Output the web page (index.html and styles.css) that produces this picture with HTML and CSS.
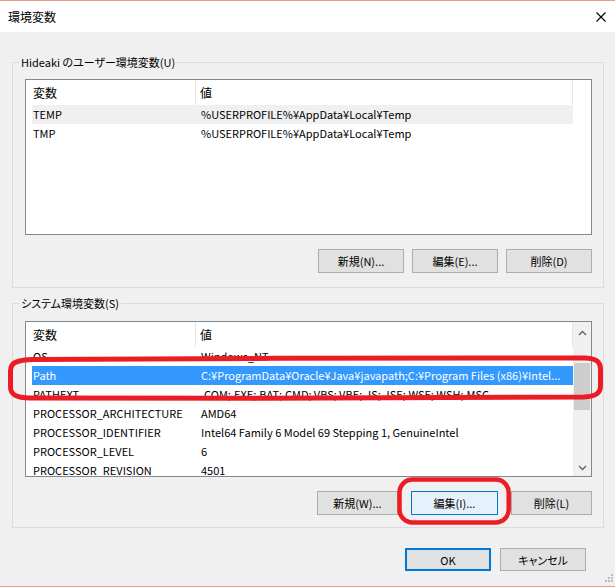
FILE: index.html
```html
<!DOCTYPE html>
<html lang="ja">
<head>
    <meta charset="UTF-8">
    <title>環境変数</title>
    <link rel="stylesheet" href="styles.css">
</head>
<body>
    <div class="window">
        <div class="titlebar">
            <span class="title">環境変数</span>
            <svg class="close-icon" width="10" height="10" viewBox="0 0 10 10">
                <path d="M0.5 0.5 L9.5 9.5 M9.5 0.5 L0.5 9.5" stroke="#000" stroke-width="1.1" fill="none"/>
            </svg>
        </div>

        <div class="content">
            <div class="group">
                <div class="group-label">Hideaki のユーザー環境変数(U)</div>
                <div class="listview">
                    <div class="list-main">
                        <div class="list-header">
                            <div class="col-head col-name">変数</div>
                            <div class="col-head col-value">値</div>
                        </div>
                        <div class="row row-inactive">
                            <span class="cell cell-name">TEMP</span>
                            <span class="cell cell-value">%USERPROFILE%¥AppData¥Local¥Temp</span>
                        </div>
                        <div class="row">
                            <span class="cell cell-name">TMP</span>
                            <span class="cell cell-value">%USERPROFILE%¥AppData¥Local¥Temp</span>
                        </div>
                    </div>
                </div>
                <div class="btn-row">
                    <button class="btn">新規(N)...</button>
                    <button class="btn">編集(E)...</button>
                    <button class="btn">削除(D)</button>
                </div>
            </div>

            <div class="group group-system">
                <div class="group-label">システム環境変数(S)</div>
                <div class="listview">
                    <div class="list-main">
                        <div class="list-header">
                            <div class="col-head col-name">変数</div>
                            <div class="col-head col-value">値</div>
                        </div>
                        <div class="row">
                            <span class="cell cell-name">OS</span>
                            <span class="cell cell-value">Windows_NT</span>
                        </div>
                        <div class="row row-selected">
                            <span class="cell cell-name">Path</span>
                            <span class="cell cell-value">C:¥ProgramData¥Oracle¥Java¥javapath;C:¥Program Files (x86)¥Intel...</span>
                        </div>
                        <div class="row">
                            <span class="cell cell-name">PATHEXT</span>
                            <span class="cell cell-value">.COM;.EXE;.BAT;.CMD;.VBS;.VBE;.JS;.JSE;.WSF;.WSH;.MSC</span>
                        </div>
                        <div class="row">
                            <span class="cell cell-name">PROCESSOR_ARCHITECTURE</span>
                            <span class="cell cell-value">AMD64</span>
                        </div>
                        <div class="row">
                            <span class="cell cell-name">PROCESSOR_IDENTIFIER</span>
                            <span class="cell cell-value">Intel64 Family 6 Model 69 Stepping 1, GenuineIntel</span>
                        </div>
                        <div class="row">
                            <span class="cell cell-name">PROCESSOR_LEVEL</span>
                            <span class="cell cell-value">6</span>
                        </div>
                        <div class="row">
                            <span class="cell cell-name">PROCESSOR_REVISION</span>
                            <span class="cell cell-value">4501</span>
                        </div>
                    </div>
                    <div class="scrollbar">
                        <div class="scroll-arrow scroll-up">
                            <svg width="9" height="6" viewBox="0 0 9 6"><path d="M1 5 L4.5 1.5 L8 5" stroke="#606060" stroke-width="1.3" fill="none"/></svg>
                        </div>
                        <div class="scroll-track">
                            <div class="scroll-thumb"></div>
                        </div>
                        <div class="scroll-arrow">
                            <svg width="9" height="6" viewBox="0 0 9 6"><path d="M1 1 L4.5 4.5 L8 1" stroke="#606060" stroke-width="1.3" fill="none"/></svg>
                        </div>
                    </div>
                </div>
                <div class="btn-row btn-row-system">
                    <button class="btn btn-narrow">新規(W)...</button>
                    <button class="btn btn-hover">編集(I)...</button>
                    <button class="btn btn-narrow">削除(L)</button>
                </div>
            </div>

            <div class="dialog-buttons">
                <button class="btn btn-dialog btn-default">OK</button>
                <button class="btn btn-dialog">キャンセル</button>
            </div>
        </div>

        <svg class="grip" width="12" height="12" viewBox="0 0 12 12">
            <rect x="9" y="1" width="2" height="2" fill="#bcbcbc"/>
            <rect x="6" y="4" width="2" height="2" fill="#bcbcbc"/>
            <rect x="9" y="4" width="2" height="2" fill="#bcbcbc"/>
            <rect x="3" y="7" width="2" height="2" fill="#bcbcbc"/>
            <rect x="6" y="7" width="2" height="2" fill="#bcbcbc"/>
            <rect x="9" y="7" width="2" height="2" fill="#bcbcbc"/>
        </svg>

        <!-- red hand-drawn marks over the screenshot -->
        <svg class="marks" width="615" height="587" viewBox="0 0 615 587">
            <path d="M34 359.5 C200 358.5 450 357.5 585 358 C597 358.5 600.5 362 600.5 370 L600.5 386 C600.5 393 596 396.5 584 397 C450 398 200 398.5 30 398 C15 398 10.5 394 10.5 387 L10.5 371 C10.5 363 15 360 34 359.5 Z"
                  stroke="#ec1c24" stroke-width="5" fill="none"/>
            <rect x="399.5" y="479.5" width="109.2" height="43" rx="13"
                  stroke="#ec1c24" stroke-width="4.5" fill="none"/>
        </svg>
    </div>
</body>
</html>
```

FILE: styles.css
```css
* {
    margin: 0;
    padding: 0;
    box-sizing: border-box;
}

body {
    width: 615px;
    height: 587px;
    overflow: hidden;
    font-family: "Noto Sans CJK JP", "Noto Sans", sans-serif;
    font-size: 11px;
    font-feature-settings: "palt";
    color: #000;
    background: #f0f0f0;
}

.window {
    position: relative;
    height: 587px;
    background: #f0f0f0;
    border-top: 1px solid #eb9e87;
    border-bottom: 1px solid #eb9e87;
}

.titlebar {
    height: 31px;
    display: flex;
    align-items: center;
    justify-content: space-between;
    padding: 0 9px 0 8px;
    background: #fff;
}

.title {
    font-size: 12px;
    line-height: 16px;
}

.content {
    padding: 30px 11px 0 12px;
}

/* group boxes */
.group {
    border: 1px solid #dcdcdc;
    padding: 0 11px 14px 12px;
}

.group + .group {
    margin-top: 15px;
}

.group-system {
    padding-bottom: 12px;
}

.group-label {
    width: fit-content;
    margin: -9px 0 0 -6px;
    padding: 0 2px;
    line-height: 16px;
    background: #f0f0f0;
}

/* list view */
.listview {
    display: flex;
    height: 156px;
    margin-top: 9px;
    border: 1px solid #828790;
    background: #fff;
    overflow: hidden;
}

.group-system .listview {
    margin-top: 10px;
}

.list-main {
    flex: 1;
    overflow: hidden;
}

.list-header {
    display: flex;
    height: 25px;
    line-height: 25px;
    font-size: 12px;
}

.col-head {
    border-right: 1px solid #e5e5e5;
}

.col-head.col-name {
    width: 170px;
    padding-left: 7px;
}

.col-head.col-value {
    width: 377px;
    padding-left: 4px;
}

.row {
    display: flex;
    width: 541px;
    height: 19px;
    margin-left: 6px;
    line-height: 19px;
    white-space: nowrap;
}

.cell {
    padding-left: 1px;
    overflow: hidden;
}

.cell-name {
    width: 168px;
}

.cell-value {
    flex: 1;
}

.row-inactive {
    background: #f0f0f0;
}

.row-selected {
    background: #3399ff;
    color: #fff;
}

/* scrollbar */
.scrollbar {
    width: 18px;
    display: flex;
    flex-direction: column;
    background: #f0f0f0;
}

.scroll-arrow {
    height: 17px;
    display: flex;
    align-items: center;
    justify-content: center;
}

.scroll-up {
    height: 21px;
}

.scroll-track {
    flex: 1;
}

.scroll-thumb {
    height: 47px;
    margin: 20px 1px 0;
    background: #cdcdcd;
}

/* buttons */
.btn-row {
    display: flex;
    justify-content: flex-end;
    gap: 8px;
    margin-top: 14px;
}

.btn-row-system {
    gap: 13px;
}

.btn {
    width: 86px;
    height: 24px;
    border: 1px solid #adadad;
    background: #e1e1e1;
    font-family: inherit;
    font-size: 11px;
    font-feature-settings: "palt";
    color: #000;
}

.btn-narrow {
    width: 81px;
}

.btn-hover {
    width: 87px;
    background: #e5f1fb;
    border-color: #0078d7;
}

.dialog-buttons {
    display: flex;
    justify-content: flex-end;
    gap: 9px;
    margin-top: 20px;
    padding-right: 18px;
}

.btn-dialog {
    height: 23px;
}

.btn-default {
    border: 2px solid #0078d7;
}

.grip {
    position: absolute;
    right: 1px;
    bottom: 1px;
}

.marks {
    position: absolute;
    top: -1px;
    left: 0;
    pointer-events: none;
}
```
